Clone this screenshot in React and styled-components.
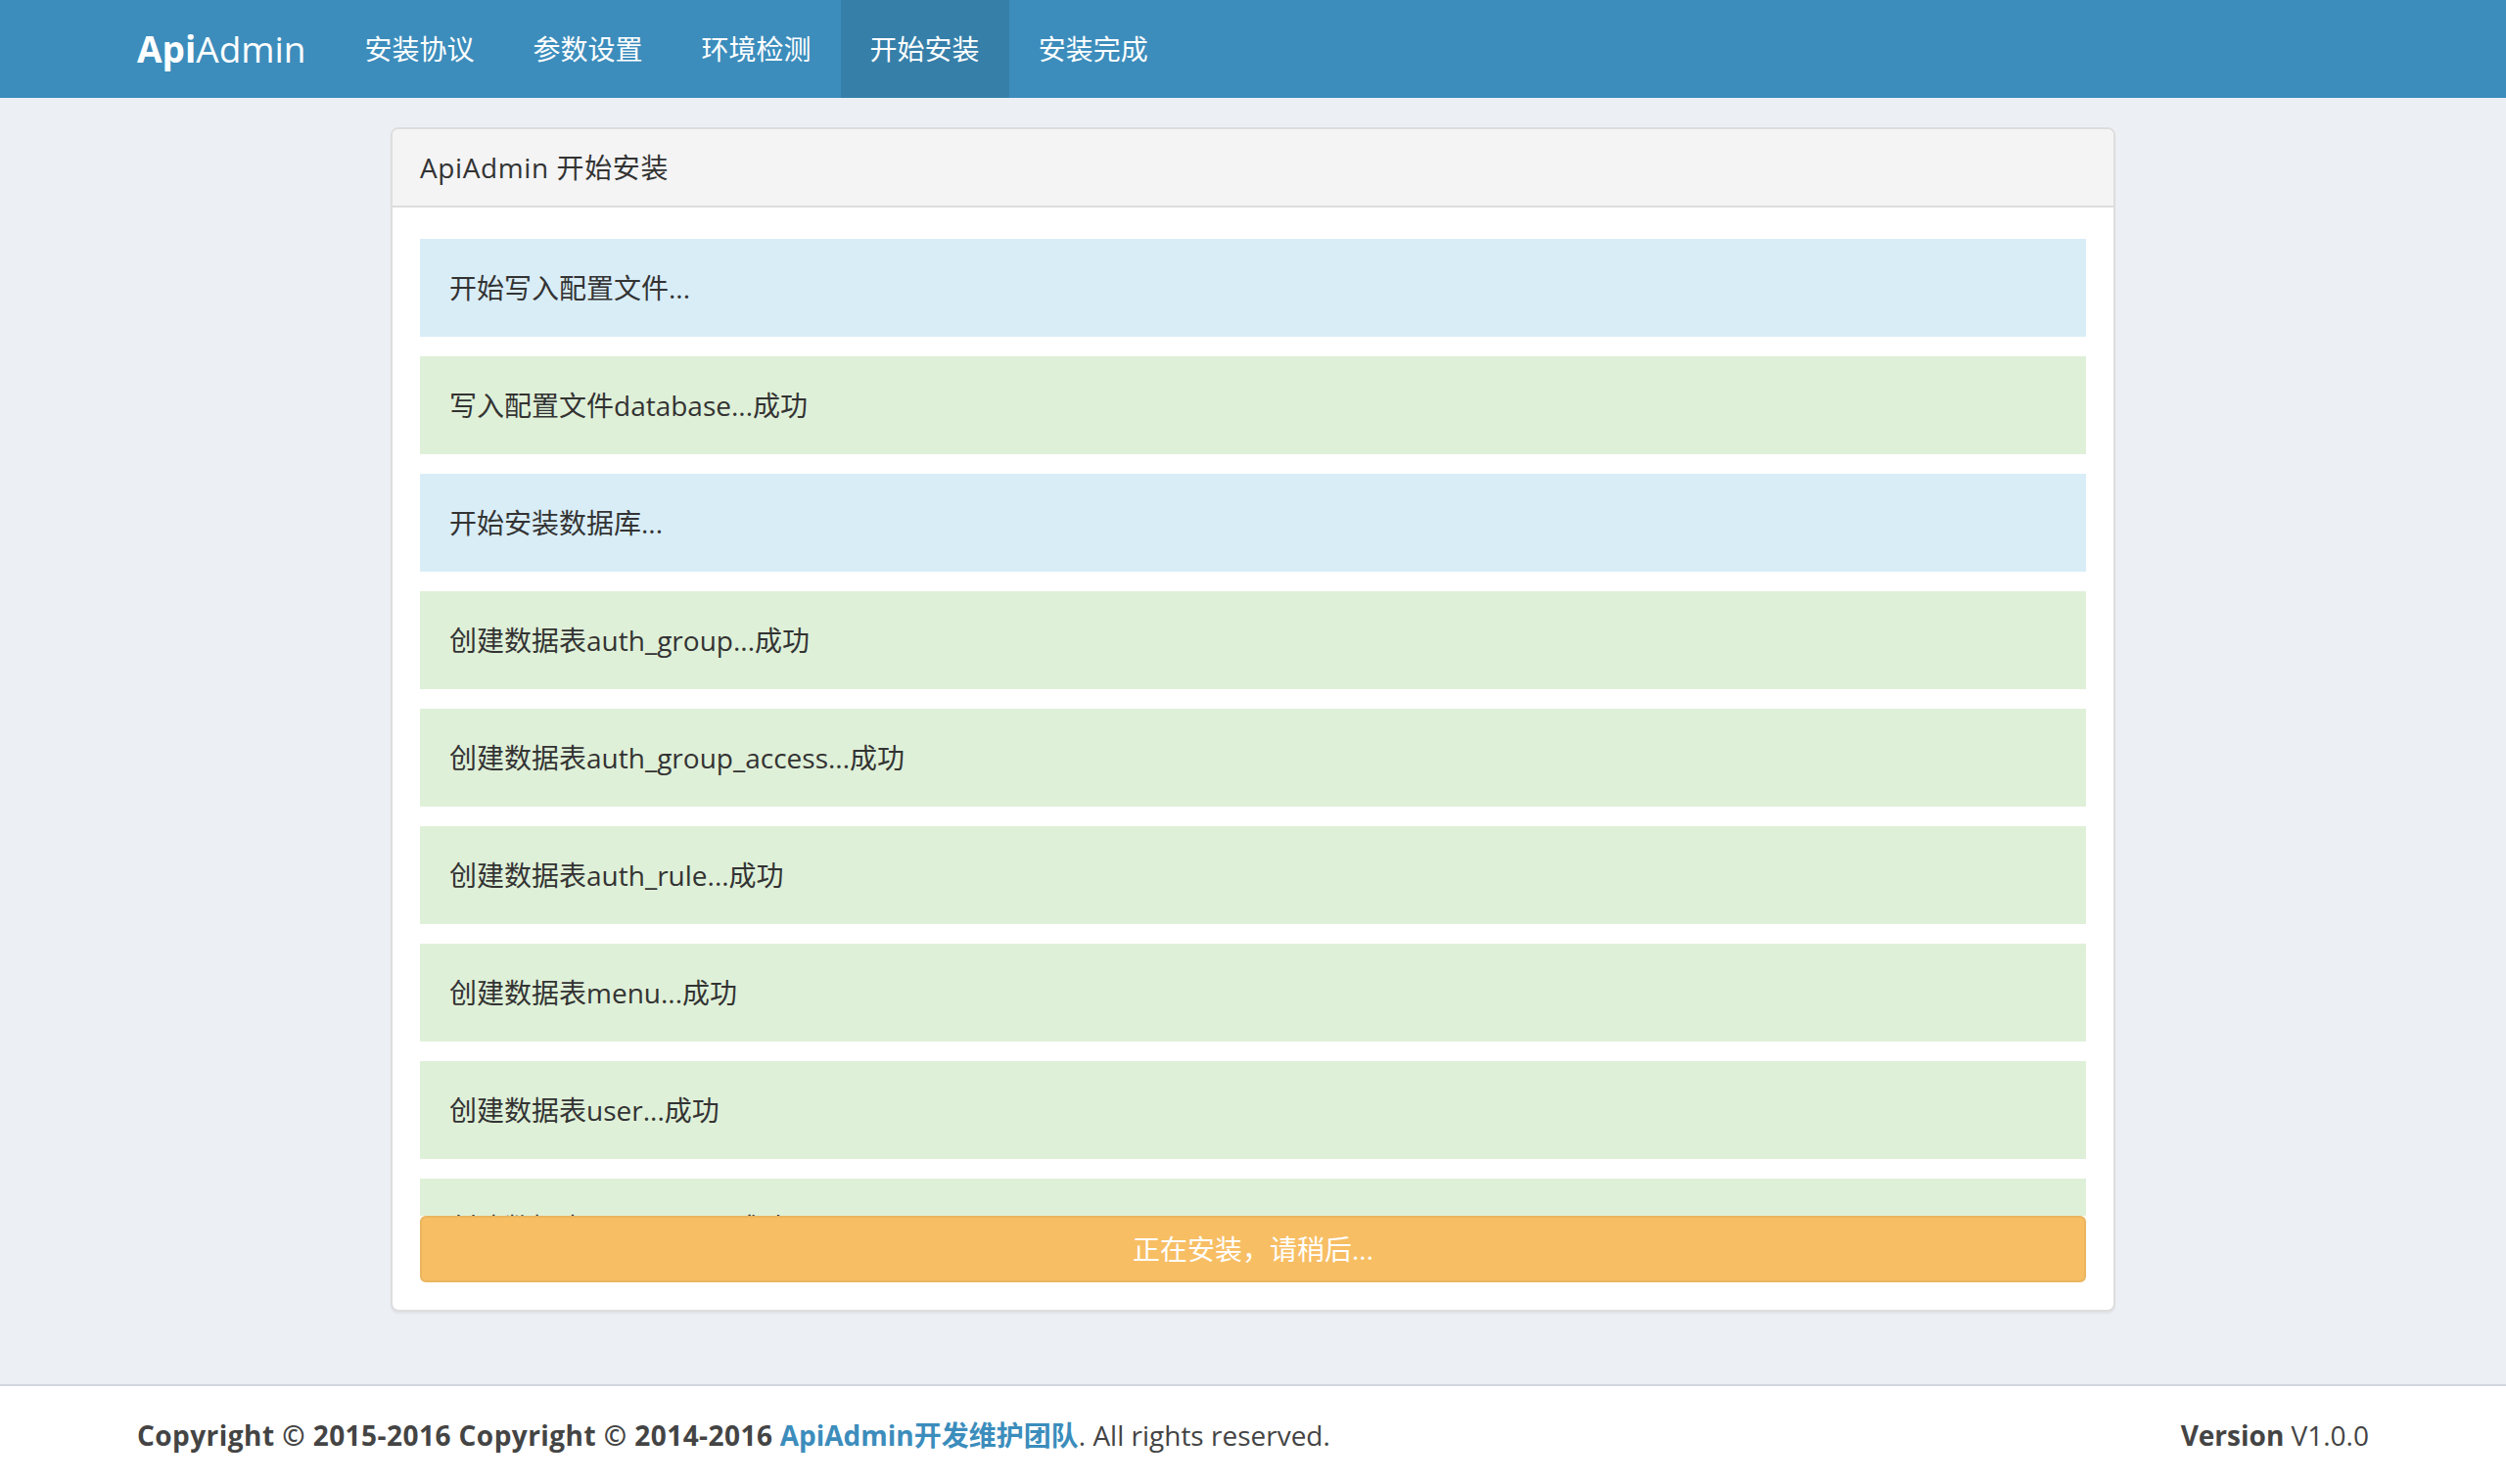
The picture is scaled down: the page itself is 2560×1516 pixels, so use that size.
import React from "react";
import styled, { createGlobalStyle } from "styled-components";

const GlobalStyle = createGlobalStyle`
  * { box-sizing: border-box; }
  html, body { margin: 0; padding: 0; }
  body {
    background: #ecf0f5;
    font-family: "Open Sans", "Noto Sans CJK SC", sans-serif;
    font-size: 28px;
    color: #333;
  }
`;

const Page = styled.div`
  min-height: 100vh;
  display: flex;
  flex-direction: column;
`;

const Navbar = styled.header`
  background: #3c8dbc;
  height: 100px;
`;

const Container = styled.div`
  width: 2340px;
  margin: 0 auto;
  padding: 0 30px;
  display: flex;
  align-items: center;
  justify-content: ${(p) => p.$justify || "flex-start"};
`;

const Brand = styled.a`
  display: block;
  margin-left: -30px;
  padding: 30px;
  font-size: 37px;
  line-height: 40px;
  color: #fff;
  text-decoration: none;
  b { font-weight: 700; }
`;

const NavList = styled.nav`
  display: flex;
`;

const NavLink = styled.a`
  display: block;
  padding: 30px;
  line-height: 40px;
  font-size: 28px;
  color: #fff;
  text-decoration: none;
  background: ${(p) => (p.$active ? "#367fa9" : "transparent")};
`;

const Main = styled.main`
  flex: 1;
  padding-top: 30px;
`;

const Panel = styled.section`
  width: 1762px;
  margin: 0 auto;
  background: #fff;
  border: 2px solid #dddddd;
  border-radius: 8px;
  box-shadow: 0 2px 2px rgba(0, 0, 0, 0.05);
`;

const PanelHeading = styled.div`
  background: #f4f4f4;
  border-bottom: 2px solid #dddddd;
  border-radius: 6px 6px 0 0;
  padding: 20px 28px;
  line-height: 38px;
  font-size: 28px;
  letter-spacing: 0.6px;
  color: #333;
`;

const PanelBody = styled.div`
  padding: 32px 28px 28px;
`;

const LogList = styled.div`
  height: 998px;
  overflow: hidden;
`;

const Alert = styled.div`
  padding: 30px;
  line-height: 40px;
  margin-bottom: 20px;
  color: #333;
  background: ${(p) => (p.$type === "info" ? "#d9edf7" : "#dff0d8")};
`;

const ProgressButton = styled.button`
  display: block;
  width: 100%;
  height: 68px;
  font-family: inherit;
  font-size: 28px;
  line-height: 40px;
  color: #fff;
  background: #f39c12;
  border: 2px solid #e08e0b;
  border-radius: 6px;
  opacity: 0.65;
  cursor: not-allowed;
`;

const Footer = styled.footer`
  background: #fff;
  border-top: 2px solid #d2d6de;
  padding: 30px 0;
  line-height: 40px;
  color: #444;
  font-size: 28px;
  b { font-weight: 700; }
  a { color: #3c8dbc; text-decoration: none; font-weight: 700; }
`;

const CopyrightText = styled.b`
  letter-spacing: 0.45px;
`;

const logs = [
  { type: "info", text: "开始写入配置文件..." },
  { type: "success", text: "写入配置文件database...成功" },
  { type: "info", text: "开始安装数据库..." },
  { type: "success", text: "创建数据表auth_group...成功" },
  { type: "success", text: "创建数据表auth_group_access...成功" },
  { type: "success", text: "创建数据表auth_rule...成功" },
  { type: "success", text: "创建数据表menu...成功" },
  { type: "success", text: "创建数据表user...成功" },
  { type: "success", text: "创建数据表user_data...成功" },
];

const navItems = ["安装协议", "参数设置", "环境检测", "开始安装", "安装完成"];

export default function App() {
  return (
    <Page>
      <GlobalStyle />
      <Navbar>
        <Container>
          <Brand href="#">
            <b>Api</b>Admin
          </Brand>
          <NavList>
            {navItems.map((n) => (
              <NavLink key={n} href="#" $active={n === "开始安装"}>
                {n}
              </NavLink>
            ))}
          </NavList>
        </Container>
      </Navbar>
      <Main>
        <Panel>
          <PanelHeading>ApiAdmin 开始安装</PanelHeading>
          <PanelBody>
            <LogList>
              {logs.map((l, i) => (
                <Alert key={i} $type={l.type}>
                  {l.text}
                </Alert>
              ))}
            </LogList>
            <ProgressButton disabled>正在安装，请稍后...</ProgressButton>
          </PanelBody>
        </Panel>
      </Main>
      <Footer>
        <Container $justify="space-between">
          <div>
            <CopyrightText>Copyright © 2015-2016 Copyright © 2014-2016</CopyrightText>{" "}
            <a href="#">ApiAdmin开发维护团队</a>. All rights reserved.
          </div>
          <div>
            <b>Version</b> V1.0.0
          </div>
        </Container>
      </Footer>
    </Page>
  );
}
